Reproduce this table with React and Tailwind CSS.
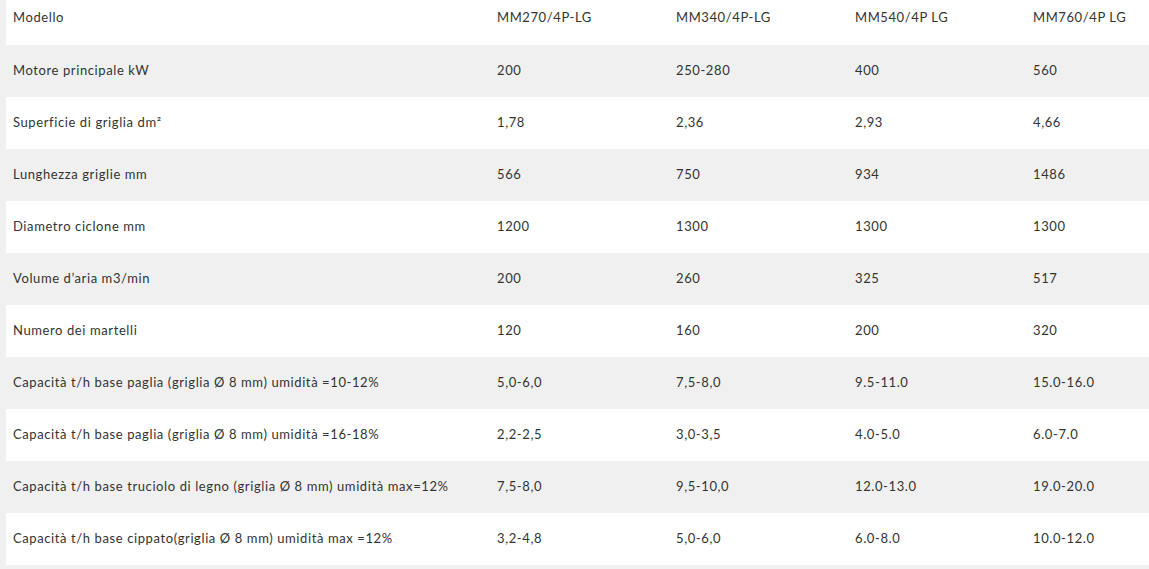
import React from "react";

const header = ["Modello", "MM270/4P-LG", "MM340/4P-LG", "MM540/4P LG", "MM760/4P LG"];

const rows = [
  ["Motore principale kW", "200", "250-280", "400", "560"],
  ["Superficie di griglia dm²", "1,78", "2,36", "2,93", "4,66"],
  ["Lunghezza griglie mm", "566", "750", "934", "1486"],
  ["Diametro ciclone mm", "1200", "1300", "1300", "1300"],
  ["Volume d’aria m3/min", "200", "260", "325", "517"],
  ["Numero dei martelli", "120", "160", "200", "320"],
  ["Capacità t/h base paglia (griglia Ø 8 mm) umidità =10-12%", "5,0-6,0", "7,5-8,0", "9.5-11.0", "15.0-16.0"],
  ["Capacità t/h base paglia (griglia Ø 8 mm) umidità =16-18%", "2,2-2,5", "3,0-3,5", "4.0-5.0", "6.0-7.0"],
  ["Capacità t/h base truciolo di legno (griglia Ø 8 mm) umidità max=12%", "7,5-8,0", "9,5-10,0", "12.0-13.0", "19.0-20.0"],
  ["Capacità t/h base cippato(griglia Ø 8 mm) umidità max =12%", "3,2-4,8", "5,0-6,0", "6.0-8.0", "10.0-12.0"],
];

const cols = "grid grid-cols-[484px_179px_179px_178px_1fr]";

export default function App() {
  return (
    <div
      className="w-[1149px] h-[569px] overflow-hidden bg-[#f0f0f0] pl-[6px] text-[13px] tracking-[0.6px] text-[#333]"
      style={{ fontFamily: "Lato, 'Open Sans', sans-serif" }}
    >
      {/* intestazione */}
      <div className={`${cols} h-[45px] items-center pb-[9px] bg-white`}>
        {header.map((h, i) => (
          <div key={i} className="pl-[7px]">
            {h}
          </div>
        ))}
      </div>
      {rows.map((row, idx) => (
        <div
          key={idx}
          className={`${cols} h-[52px] items-center ${idx % 2 === 0 ? "bg-[#f0f0f0]" : "bg-white"}`}
        >
          {row.map((cell, i) => (
            <div key={i} className="pl-[7px]">
              {cell}
            </div>
          ))}
        </div>
      ))}
    </div>
  );
}
